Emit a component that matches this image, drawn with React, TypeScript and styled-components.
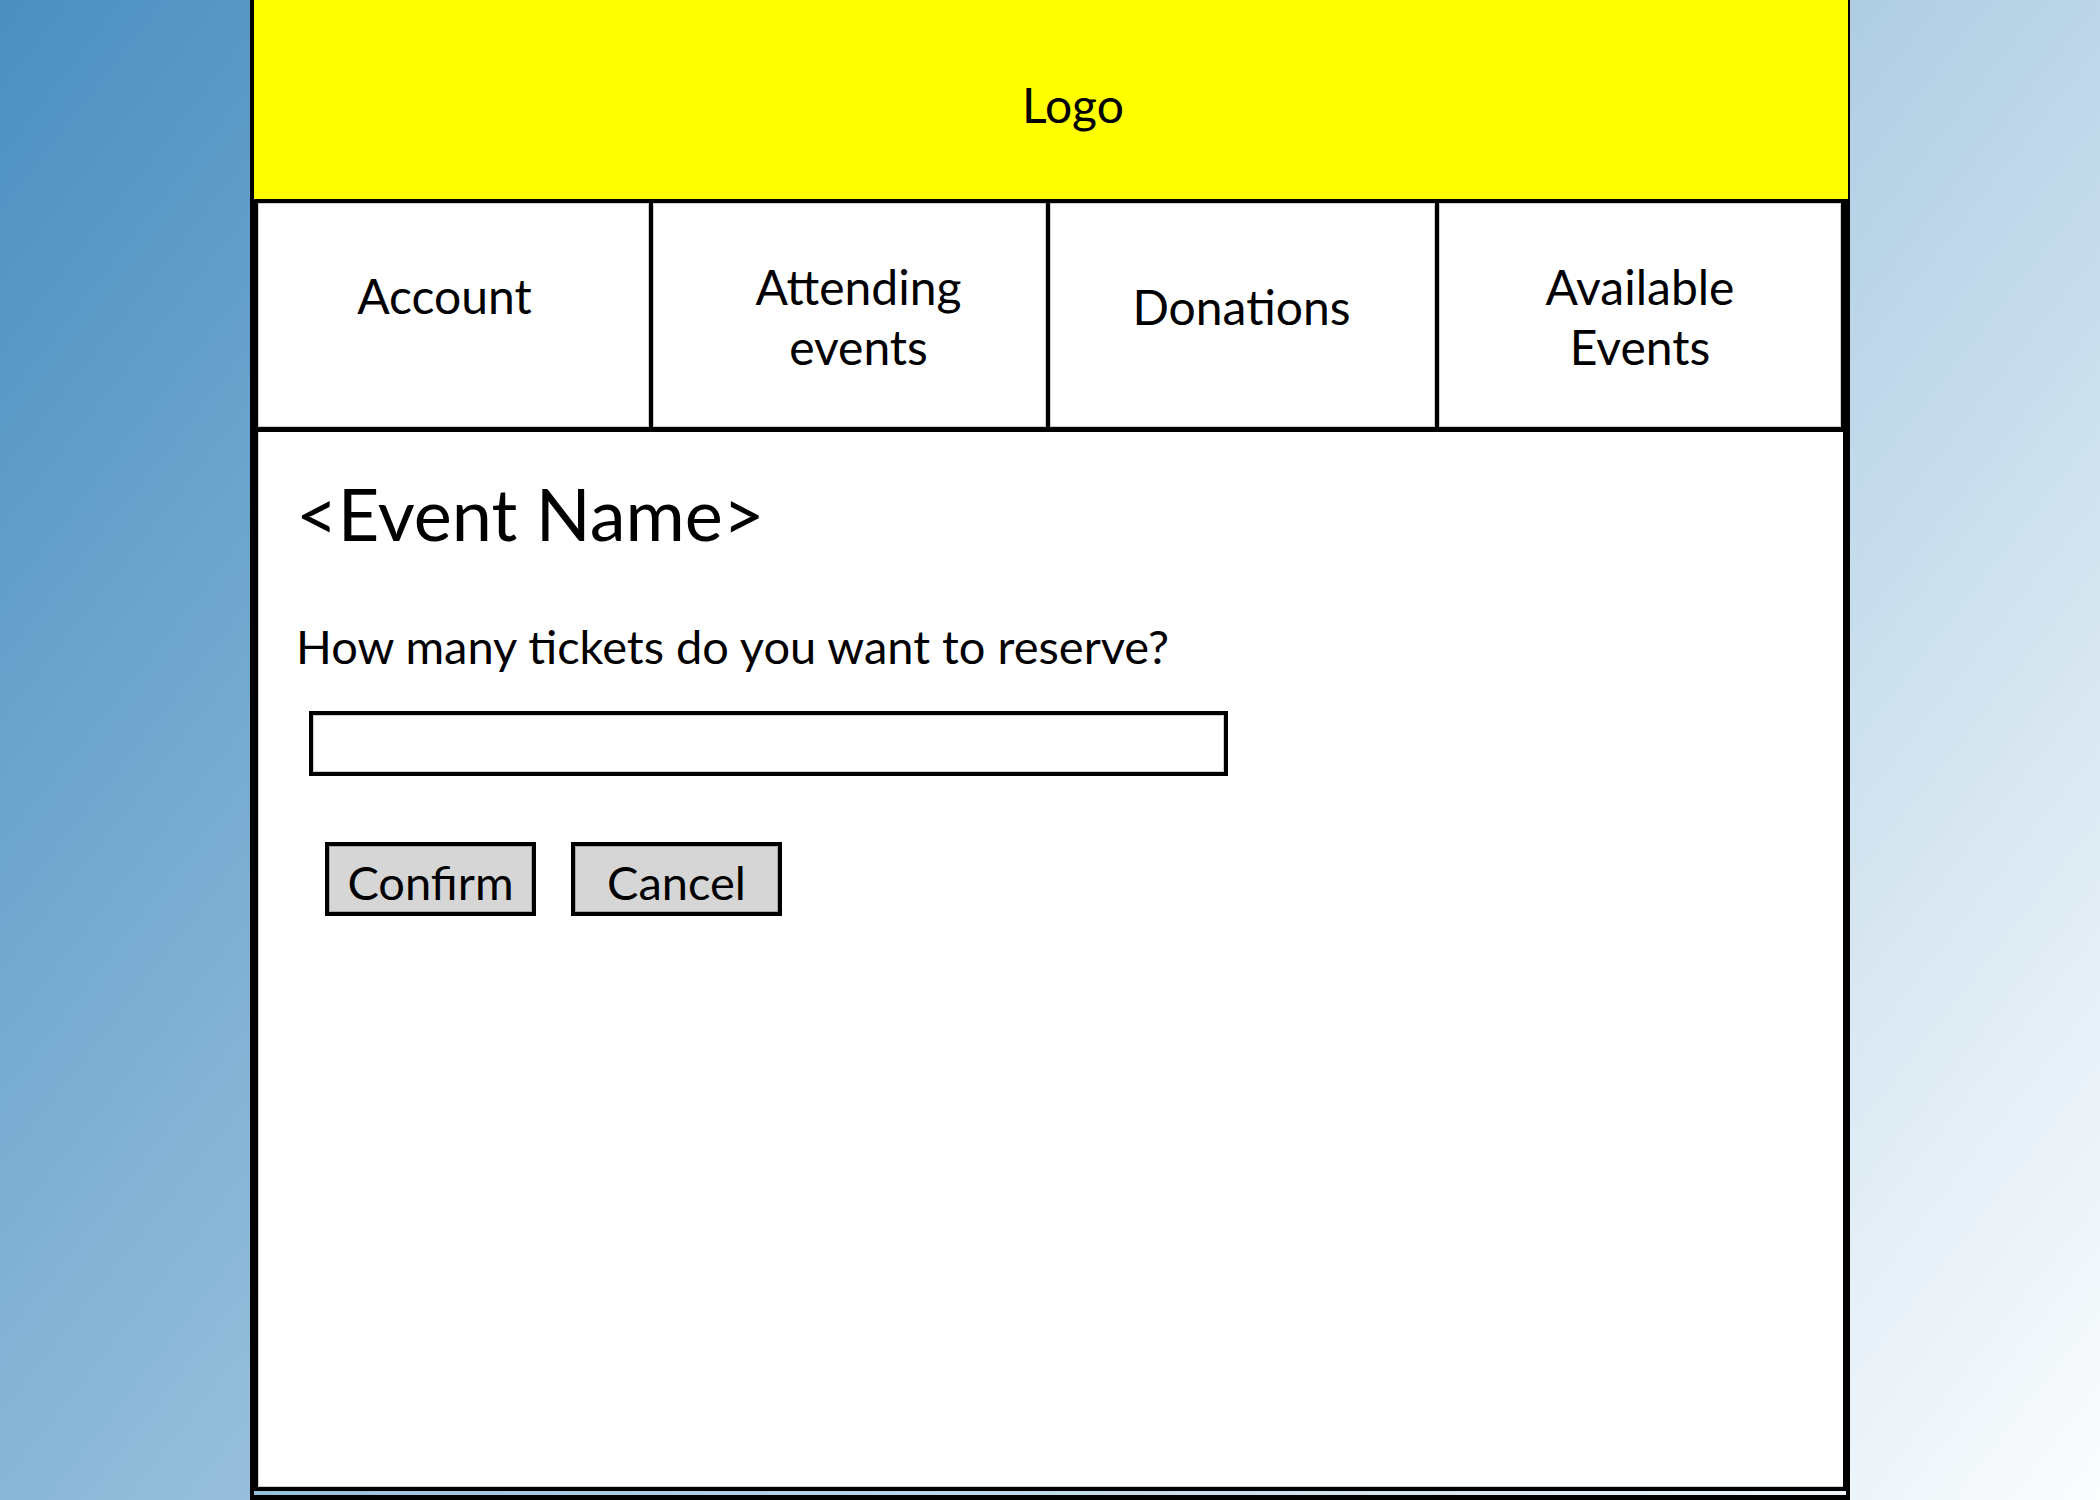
import React from "react";
import styled, { createGlobalStyle } from "styled-components";

const GlobalStyle = createGlobalStyle`
  html, body {
    margin: 0;
    padding: 0;
    height: 1500px;
    overflow: hidden;
  }
  body {
    background: linear-gradient(128deg, #4a8fc1 0%, #fbfdfe 100%);
    font-family: Lato, "Open Sans", sans-serif;
    color: #000;
  }
  * { box-sizing: border-box; }
`;

const Frame = styled.div`
  margin-left: 250px;
  width: 1600px;
  height: 1500px;
  border-left: 4px solid #000;
  border-right: 2px solid #000;
  display: flex;
  flex-direction: column;
`;

const Header = styled.header`
  height: 203px;
  flex: none;
  background: #ffff00;
  border-bottom: 4px solid #000;
  display: flex;
  align-items: center;
  justify-content: center;
  padding-left: 44px;
  padding-top: 10px;
`;

const Logo = styled.div`
  font-size: 48px;
  line-height: 1;
`;

const Nav = styled.nav`
  height: 229px;
  flex: none;
  display: grid;
  grid-template-columns: 395px 397px 389px 402px;
  background: #fff;
  border-left: 4px solid #000;
  border-right: 7px solid #000;
  border-bottom: 5px solid #000;
`;

const NavCell = styled.div<{ $dx: number; $dy: number }>`
  display: flex;
  align-items: center;
  justify-content: center;
  text-align: center;
  font-size: 48px;
  line-height: 60px;
  box-shadow: inset 0 0 0 1px #cfcfcf;
  padding-left: ${(p) => Math.max(0, p.$dx * 2)}px;
  padding-right: ${(p) => Math.max(0, -p.$dx * 2)}px;
  padding-top: ${(p) => Math.max(0, p.$dy * 2)}px;
  padding-bottom: ${(p) => Math.max(0, -p.$dy * 2)}px;
  &:not(:last-child) {
    border-right: 4px solid #000;
  }
`;

const Content = styled.main`
  flex: none;
  height: 1059px;
  background: #fff;
  border-left: 4px solid #000;
  border-right: 5px solid #000;
  border-bottom: 4px solid #000;
  box-shadow: inset 1px 0 0 #cfcfcf, inset 0 -1px 0 #cfcfcf;
  padding: 45px 0 0 38px;
  display: flex;
  flex-direction: column;
  align-items: flex-start;
`;

const Title = styled.h1`
  margin: 0;
  font-size: 72px;
  font-weight: 400;
  line-height: 1;
`;

const Question = styled.p`
  margin: 74px 0 0 0;
  font-size: 47px;
  line-height: 1;
`;

const TicketInput = styled.input`
  margin: 41px 0 0 13px;
  width: 919px;
  height: 65px;
  border: 4px solid #000;
  background: #fff;
  box-shadow: inset 0 0 0 1px #cfcfcf;
  outline: none;
  padding: 0 10px;
  font-family: inherit;
  font-size: 36px;
`;

const ButtonRow = styled.div`
  margin: 66px 0 0 29px;
  display: flex;
  gap: 35px;
`;

const Button = styled.button`
  width: 211px;
  height: 74px;
  border: 4px solid #000;
  background: #d6d6d6;
  box-shadow: inset 0 0 0 1px #a8a8a8;
  font-family: inherit;
  font-size: 47px;
  line-height: 1;
  color: #000;
  padding: 7px 0 0 0;
  display: flex;
  align-items: center;
  justify-content: center;
  cursor: pointer;
`;

const Gap = styled.div`
  flex: none;
  height: 4px;
  border-right: 2px solid #000;
`;

const BottomBar = styled.div`
  flex: none;
  height: 5px;
  background: #000;
`;

const navItems: { lines: string[]; dx: number; dy: number }[] = [
  { lines: ["Account"], dx: -9, dy: -19 },
  { lines: ["Attending", "events"], dx: 9, dy: 2 },
  { lines: ["Donations"], dx: -1, dy: -8 },
  { lines: ["Available", "Events"], dx: 0, dy: 2 },
];

export default function App() {
  return (
    <>
      <GlobalStyle />
      <Frame>
        <Header>
          <Logo>Logo</Logo>
        </Header>
        <Nav>
          {navItems.map((item) => (
            <NavCell key={item.lines.join(" ")} $dx={item.dx} $dy={item.dy}>
              <span>
                {item.lines.map((line, i) => (
                  <React.Fragment key={line}>
                    {i > 0 && <br />}
                    {line}
                  </React.Fragment>
                ))}
              </span>
            </NavCell>
          ))}
        </Nav>
        <Content>
          <Title>&lt;Event Name&gt;</Title>
          <Question>How many tickets do you want to reserve?</Question>
          <TicketInput type="text" aria-label="Number of tickets" />
          <ButtonRow>
            <Button type="button">Confirm</Button>
            <Button type="button">Cancel</Button>
          </ButtonRow>
        </Content>
        <Gap />
        <BottomBar />
      </Frame>
    </>
  );
}
